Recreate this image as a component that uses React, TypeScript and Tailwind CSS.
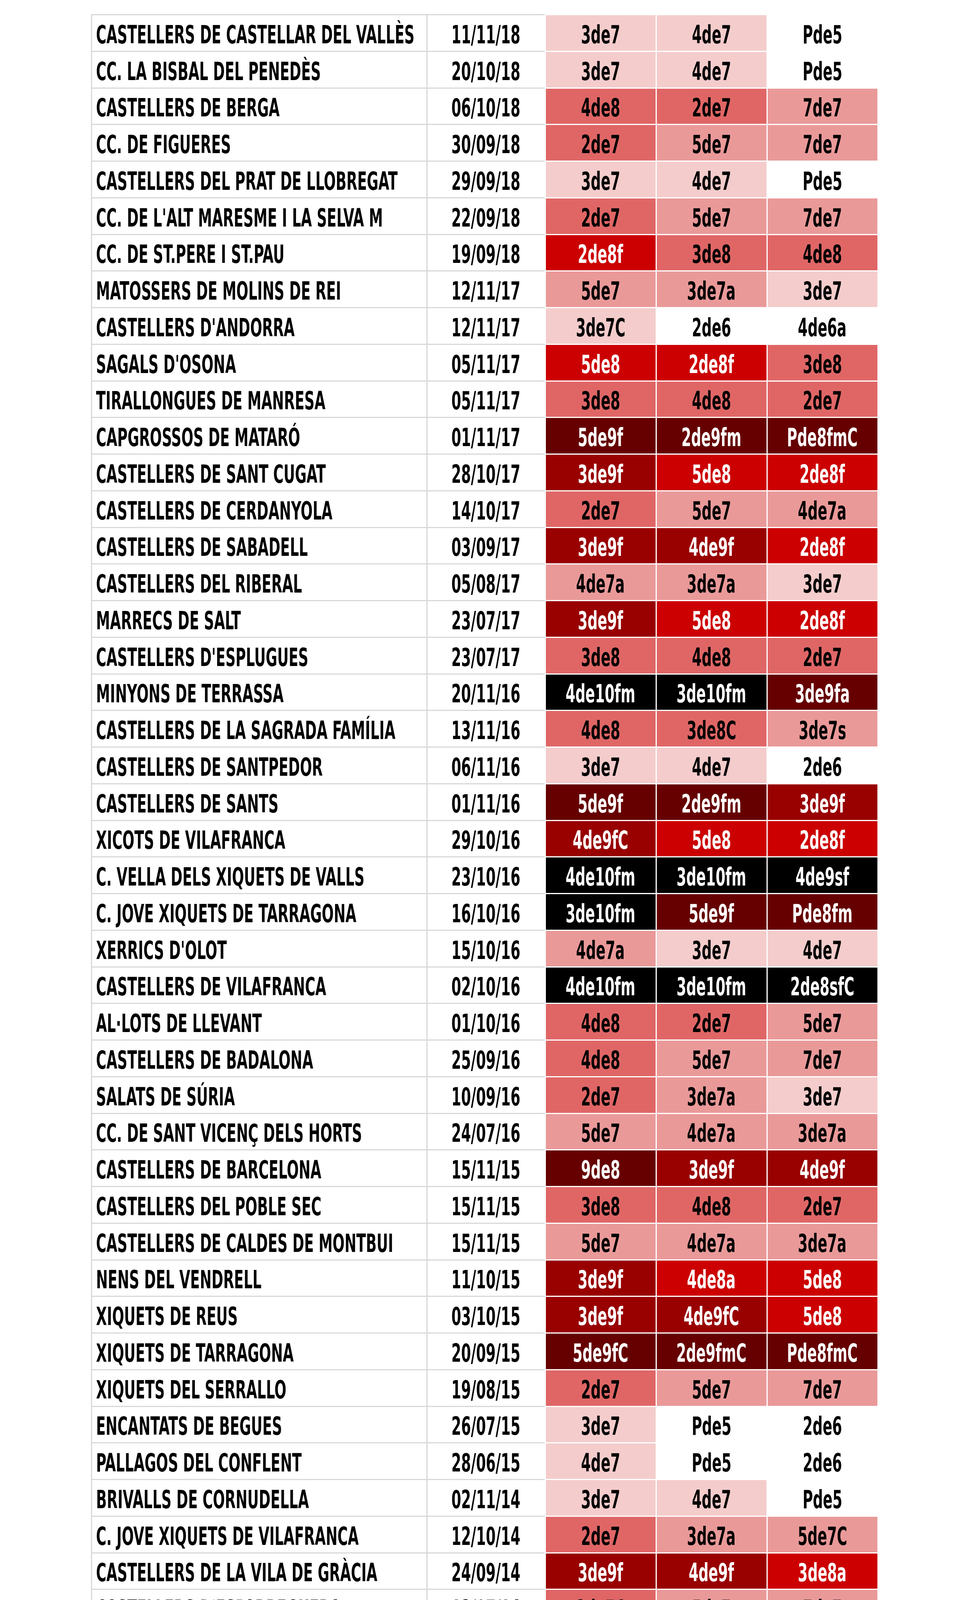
import React from "react";

type Level = "L1" | "L2" | "L3" | "R" | "D" | "DD" | "K" | "W";

const tone: Record<Level, string> = {
  L1: "bg-[#f4cccc] text-black",
  L2: "bg-[#ea9999] text-black",
  L3: "bg-[#e06666] text-black",
  R: "bg-[#cc0000] text-white",
  D: "bg-[#990000] text-white",
  DD: "bg-[#660000] text-white",
  K: "bg-black text-white",
  W: "bg-white text-black",
};

// colour of a castell depends only on its difficulty
const levels: Record<string, Level> = {
  Pde5: "W",
  "2de6": "W",
  "4de6a": "W",
  "3de7": "L1",
  "4de7": "L1",
  "3de7C": "L1",
  "5de7": "L2",
  "7de7": "L2",
  "3de7a": "L2",
  "4de7a": "L2",
  "3de7s": "L2",
  "5de7C": "L2",
  "2de7": "L3",
  "2de7C": "L3",
  "3de8": "L3",
  "4de8": "L3",
  "3de8C": "L3",
  "2de8f": "R",
  "5de8": "R",
  "4de8a": "R",
  "3de8a": "R",
  Pde7fC: "R",
  "3de9f": "D",
  "4de9f": "D",
  "4de9fC": "D",
  "5de9f": "DD",
  "5de9fC": "DD",
  "2de9fm": "DD",
  "2de9fmC": "DD",
  "3de9fa": "DD",
  "9de8": "DD",
  Pde8fm: "DD",
  Pde8fmC: "DD",
  "4de10fm": "K",
  "3de10fm": "K",
  "4de9sf": "K",
  "2de8sfC": "K",
};

const rows: [string, string, string, string, string][] = [
  ["CASTELLERS DE CASTELLAR DEL VALLÈS", "11/11/18", "3de7", "4de7", "Pde5"],
  ["CC. LA BISBAL DEL PENEDÈS", "20/10/18", "3de7", "4de7", "Pde5"],
  ["CASTELLERS DE BERGA", "06/10/18", "4de8", "2de7", "7de7"],
  ["CC. DE FIGUERES", "30/09/18", "2de7", "5de7", "7de7"],
  ["CASTELLERS DEL PRAT DE LLOBREGAT", "29/09/18", "3de7", "4de7", "Pde5"],
  ["CC. DE L'ALT MARESME I LA SELVA M", "22/09/18", "2de7", "5de7", "7de7"],
  ["CC. DE ST.PERE I ST.PAU", "19/09/18", "2de8f", "3de8", "4de8"],
  ["MATOSSERS DE MOLINS DE REI", "12/11/17", "5de7", "3de7a", "3de7"],
  ["CASTELLERS D'ANDORRA", "12/11/17", "3de7C", "2de6", "4de6a"],
  ["SAGALS D'OSONA", "05/11/17", "5de8", "2de8f", "3de8"],
  ["TIRALLONGUES DE MANRESA", "05/11/17", "3de8", "4de8", "2de7"],
  ["CAPGROSSOS DE MATARÓ", "01/11/17", "5de9f", "2de9fm", "Pde8fmC"],
  ["CASTELLERS DE SANT CUGAT", "28/10/17", "3de9f", "5de8", "2de8f"],
  ["CASTELLERS DE CERDANYOLA", "14/10/17", "2de7", "5de7", "4de7a"],
  ["CASTELLERS DE SABADELL", "03/09/17", "3de9f", "4de9f", "2de8f"],
  ["CASTELLERS DEL RIBERAL", "05/08/17", "4de7a", "3de7a", "3de7"],
  ["MARRECS DE SALT", "23/07/17", "3de9f", "5de8", "2de8f"],
  ["CASTELLERS D'ESPLUGUES", "23/07/17", "3de8", "4de8", "2de7"],
  ["MINYONS DE TERRASSA", "20/11/16", "4de10fm", "3de10fm", "3de9fa"],
  ["CASTELLERS DE LA SAGRADA FAMÍLIA", "13/11/16", "4de8", "3de8C", "3de7s"],
  ["CASTELLERS DE SANTPEDOR", "06/11/16", "3de7", "4de7", "2de6"],
  ["CASTELLERS DE SANTS", "01/11/16", "5de9f", "2de9fm", "3de9f"],
  ["XICOTS DE VILAFRANCA", "29/10/16", "4de9fC", "5de8", "2de8f"],
  ["C. VELLA DELS XIQUETS DE VALLS", "23/10/16", "4de10fm", "3de10fm", "4de9sf"],
  ["C. JOVE XIQUETS DE TARRAGONA", "16/10/16", "3de10fm", "5de9f", "Pde8fm"],
  ["XERRICS D'OLOT", "15/10/16", "4de7a", "3de7", "4de7"],
  ["CASTELLERS DE VILAFRANCA", "02/10/16", "4de10fm", "3de10fm", "2de8sfC"],
  ["AL·LOTS DE LLEVANT", "01/10/16", "4de8", "2de7", "5de7"],
  ["CASTELLERS DE BADALONA", "25/09/16", "4de8", "5de7", "7de7"],
  ["SALATS DE SÚRIA", "10/09/16", "2de7", "3de7a", "3de7"],
  ["CC. DE SANT VICENÇ DELS HORTS", "24/07/16", "5de7", "4de7a", "3de7a"],
  ["CASTELLERS DE BARCELONA", "15/11/15", "9de8", "3de9f", "4de9f"],
  ["CASTELLERS DEL POBLE SEC", "15/11/15", "3de8", "4de8", "2de7"],
  ["CASTELLERS DE CALDES DE MONTBUI", "15/11/15", "5de7", "4de7a", "3de7a"],
  ["NENS DEL VENDRELL", "11/10/15", "3de9f", "4de8a", "5de8"],
  ["XIQUETS DE REUS", "03/10/15", "3de9f", "4de9fC", "5de8"],
  ["XIQUETS DE TARRAGONA", "20/09/15", "5de9fC", "2de9fmC", "Pde8fmC"],
  ["XIQUETS DEL SERRALLO", "19/08/15", "2de7", "5de7", "7de7"],
  ["ENCANTATS DE BEGUES", "26/07/15", "3de7", "Pde5", "2de6"],
  ["PALLAGOS DEL CONFLENT", "28/06/15", "4de7", "Pde5", "2de6"],
  ["BRIVALLS DE CORNUDELLA", "02/11/14", "3de7", "4de7", "Pde5"],
  ["C. JOVE XIQUETS DE VILAFRANCA", "12/10/14", "2de7", "3de7a", "5de7C"],
  ["CASTELLERS DE LA VILA DE GRÀCIA", "24/09/14", "3de9f", "4de9f", "3de8a"],
  ["CASTELLERS D'ESPARREGUERA", "12/07/14", "2de7C", "5de7", "7de7"],
  ["MARGENERS DE GUISSONA", "08/09/12", "4de8", "2de7", "3de7s"],
  ["C. JOVE DE L'HOSPITALET", "02/10/11", "3de7a", "3de7", "4de7"],
  ["CJOVE DE CASTELLERS DE SITGES", "24/10/09", "4de8", "2de7C", "5de7"],
  ["CASTELLERS DE LLEIDA", "09/11/08", "2de8f", "Pde7fC", "3de8"],
  ["MINYONS DE L'ARBOÇ", "27/08/06", "2de7", "5de7", "4de7a"],
  ["CASTELLERS DE MALLORCA", "15/10/05", "2de7", "3de7s", "5de7"],
  ["CASTELLERS DE SANT FELIU", "10/11/02", "4de7a", "3de7", "4de7"],
  ["CASTELLERS DE RUBÍ", "20/10/01", "3de7", "4de7", "2de6"],
];

const font =
  "font-['DejaVu_Sans_Condensed','DejaVu_Sans',sans-serif] [font-stretch:condensed] font-bold text-[64px] leading-none";

function Castell({ name }: { name: string }) {
  return (
    <div
      className={`flex w-[284px] items-center justify-center border-b-[3px] border-l-[3px] border-white pt-[9px] ${tone[levels[name]]}`}
    >
      <span className="inline-block origin-center scale-x-[0.625] whitespace-nowrap">{name}</span>
    </div>
  );
}

export default function App() {
  return (
    <main className={`bg-white pt-[36px] ${font}`}>
      <div className="mx-auto w-[2014px]">
        <div className="h-[3px] w-[1162px] bg-[#d9d9d9]" />

        {rows.map(([team, date, a, b, c]) => (
          <div key={team} className="flex h-[93.75px]">
            <div className="flex w-[862px] items-center overflow-hidden border-x-[3px] border-b-[3px] border-[#d9d9d9] pl-[10px] pt-[9px] text-black">
              <span className="inline-block origin-left scale-x-[0.625] whitespace-nowrap">
                {team}
              </span>
            </div>

            <div className="flex w-[300px] items-center justify-center border-b-[3px] border-[#d9d9d9] pt-[9px] text-black">
              <span className="inline-block origin-center scale-x-[0.625] whitespace-nowrap">
                {date}
              </span>
            </div>

            <Castell name={a} />
            <Castell name={b} />
            <Castell name={c} />
          </div>
        ))}
      </div>
    </main>
  );
}
